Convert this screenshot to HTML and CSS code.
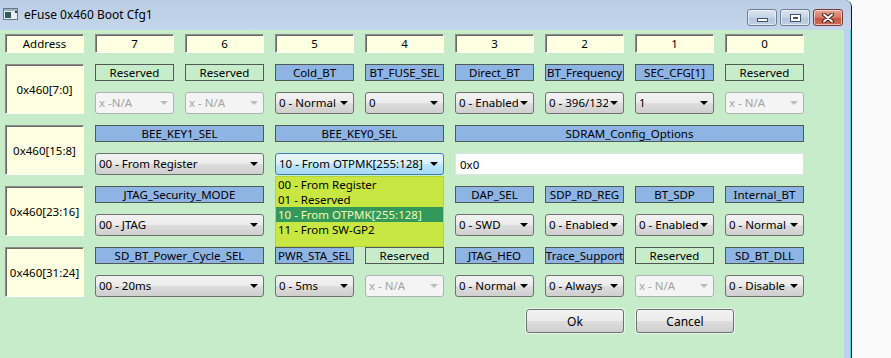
FILE: index.html
```html
<!DOCTYPE html>
<html lang="en">
<head>
    <meta charset="UTF-8">
    <title>eFuse 0x460 Boot Cfg1</title>
    <link rel="stylesheet" href="styles.css">
</head>
<body>
    <div class="screen">
        <div class="window">
            <div class="titlebar">
                <svg class="app-icon" width="16" height="14" viewBox="0 0 16 14">
                    <rect x="0.5" y="1.5" width="14" height="11" fill="#e8edf2" stroke="#6b7785"/>
                    <rect x="1" y="2" width="13" height="2" fill="#9fb3c8"/>
                    <rect x="2" y="5" width="6" height="6" fill="#2f5b5a"/>
                    <rect x="12" y="4" width="2" height="2" fill="#3a3a3a"/>
                </svg>
                <span class="title">eFuse 0x460 Boot Cfg1</span>
                <div class="caption-btns">
                    <div class="cap-btn"><span class="glyph-min"></span></div>
                    <div class="cap-btn"><span class="glyph-max"></span></div>
                    <div class="cap-btn close">
                        <svg width="14" height="10" viewBox="0 0 14 10">
                            <path d="M3 1.5 L11 8.5 M11 1.5 L3 8.5" stroke="#3d2020" stroke-width="4" stroke-linecap="round"/>
                            <path d="M3 1.5 L11 8.5 M11 1.5 L3 8.5" stroke="#ffffff" stroke-width="2" stroke-linecap="round"/>
                        </svg>
                    </div>
                </div>
            </div>

            <div class="client">
                <div class="fuse-grid">
                    <!-- bit headers -->
                    <div class="hdr">Address</div>
                    <div class="hdr">7</div>
                    <div class="hdr">6</div>
                    <div class="hdr">5</div>
                    <div class="hdr">4</div>
                    <div class="hdr">3</div>
                    <div class="hdr">2</div>
                    <div class="hdr">1</div>
                    <div class="hdr">0</div>

                    <!-- 0x460[7:0] -->
                    <div class="addr">0x460[7:0]</div>
                    <div class="lbl reserved">Reserved</div>
                    <div class="lbl reserved">Reserved</div>
                    <div class="lbl">Cold_BT</div>
                    <div class="lbl">BT_FUSE_SEL</div>
                    <div class="lbl">Direct_BT</div>
                    <div class="lbl">BT_Frequency</div>
                    <div class="lbl">SEC_CFG[1]</div>
                    <div class="lbl reserved">Reserved</div>

                    <div class="combo disabled"><span class="val">x -N/A</span></div>
                    <div class="combo disabled"><span class="val">x - N/A</span></div>
                    <div class="combo"><span class="val">0 - Normal</span></div>
                    <div class="combo"><span class="val">0</span></div>
                    <div class="combo"><span class="val">0 - Enabled</span></div>
                    <div class="combo"><span class="val">0 - 396/132MHz</span></div>
                    <div class="combo"><span class="val">1</span></div>
                    <div class="combo disabled"><span class="val">x - N/A</span></div>

                    <!-- 0x460[15:8] -->
                    <div class="addr">0x460[15:8]</div>
                    <div class="lbl span2">BEE_KEY1_SEL</div>
                    <div class="lbl span2">BEE_KEY0_SEL</div>
                    <div class="lbl span4">SDRAM_Config_Options</div>

                    <div class="combo span2"><span class="val">00 - From Register</span></div>
                    <div class="combo span2 open">
                        <span class="val">10 - From OTPMK[255:128]</span>
                        <ul class="drop-list">
                            <li>00 - From Register</li>
                            <li>01 - Reserved</li>
                            <li class="sel">10 - From OTPMK[255:128]</li>
                            <li>11 - From SW-GP2</li>
                        </ul>
                    </div>
                    <div class="text-field span4">0x0</div>

                    <!-- 0x460[23:16] -->
                    <div class="addr">0x460[23:16]</div>
                    <div class="lbl span2">JTAG_Security_MODE</div>
                    <div class="lbl span2 hidden"></div>
                    <div class="lbl">DAP_SEL</div>
                    <div class="lbl">SDP_RD_REG</div>
                    <div class="lbl">BT_SDP</div>
                    <div class="lbl">Internal_BT</div>

                    <div class="combo span2"><span class="val">00 - JTAG</span></div>
                    <div class="combo span2 hidden"></div>
                    <div class="combo"><span class="val">0 - SWD</span></div>
                    <div class="combo"><span class="val">0 - Enabled</span></div>
                    <div class="combo"><span class="val">0 - Enabled</span></div>
                    <div class="combo"><span class="val">0 - Normal</span></div>

                    <!-- 0x460[31:24] -->
                    <div class="addr">0x460[31:24]</div>
                    <div class="lbl span2">SD_BT_Power_Cycle_SEL</div>
                    <div class="lbl">PWR_STA_SEL</div>
                    <div class="lbl reserved">Reserved</div>
                    <div class="lbl">JTAG_HEO</div>
                    <div class="lbl">Trace_Support</div>
                    <div class="lbl reserved">Reserved</div>
                    <div class="lbl">SD_BT_DLL</div>

                    <div class="combo span2"><span class="val">00 - 20ms</span></div>
                    <div class="combo"><span class="val">0 - 5ms</span></div>
                    <div class="combo disabled"><span class="val">x - N/A</span></div>
                    <div class="combo"><span class="val">0 - Normal</span></div>
                    <div class="combo"><span class="val">0 - Always</span></div>
                    <div class="combo disabled"><span class="val">x - N/A</span></div>
                    <div class="combo"><span class="val">0 - Disable</span></div>
                </div>

                <div class="dlg-buttons">
                    <button class="btn">Ok</button>
                    <button class="btn">Cancel</button>
                </div>
            </div>
        </div>
    </div>
</body>
</html>
```

FILE: styles.css
```css
* {
    box-sizing: border-box;
}

body {
    margin: 0;
    background: #f9f9f9;
    font-family: "Noto Sans", "Open Sans", sans-serif;
    font-size: 11.5px;
    color: #000;
}

.screen {
    display: flex;
    height: 358px;
    overflow: hidden;
}

/* Window frame */
.window {
    width: 852px;
    height: 358px;
    display: flex;
    flex-direction: column;
    background: #bcd3ea;
    border-right: 1px solid #101820;
    border-top-right-radius: 7px;
    box-shadow: inset -1px 0 0 #5fc6ee;
    overflow: hidden;
}

.titlebar {
    height: 30px;
    flex-shrink: 0;
    display: flex;
    align-items: center;
    padding-left: 3px;
    padding-right: 8px;
    background: linear-gradient(#b9cde5, #c3d6eb);
}

.app-icon {
    margin-right: 5px;
    margin-top: -2px;
}

.title {
    font-size: 12px;
    color: #000;
    margin-top: -2px;
}

.caption-btns {
    margin-left: auto;
    display: flex;
    gap: 3px;
    align-self: flex-start;
    margin-top: 9px;
}

.cap-btn {
    width: 30px;
    height: 17px;
    border: 1px solid #6d7f96;
    border-radius: 3px;
    background: linear-gradient(#dbe5f0, #c4d3e4 50%, #b2c5dc 51%, #bfd0e3);
    box-shadow: inset 0 0 0 1px rgba(255,255,255,0.55);
    display: flex;
    align-items: center;
    justify-content: center;
}

.cap-btn.close {
    border-color: #7a3a33;
    background: linear-gradient(#e7a595, #d47a66 50%, #c4503a 51%, #d0705a);
}

.glyph-min {
    width: 11px;
    height: 4px;
    margin-top: 5px;
    background: #fff;
    border: 1px solid #44546a;
}

.glyph-max {
    width: 11px;
    height: 8px;
    background: #fff;
    border: 1px solid #44546a;
    box-shadow: inset 0 0 0 2px #fff, inset 0 0 0 3px #44546a;
}

/* Client area */
.client {
    flex: 1;
    width: 844px;
    background: #c6ecca;
    padding: 4px 0 0 5px;
}

.fuse-grid {
    display: grid;
    grid-template-columns: repeat(9, 79px);
    grid-template-rows: 19px repeat(4, 17px 22px);
    column-gap: 11px;
    row-gap: 11px;
}

.span2 {
    grid-column: span 2;
}

.span4 {
    grid-column: span 4;
}

.hidden {
    visibility: hidden;
}

.hdr,
.addr {
    background: #ffffe1;
    border: 1px solid;
    border-color: #8c8c8c #ffffff #ffffff #8c8c8c;
    box-shadow: inset 1px 1px 0 #6a6a6a;
    display: flex;
    align-items: center;
    justify-content: center;
    line-height: 15px;
}

.addr {
    grid-row: span 2;
}

.lbl {
    background: #8db4e3;
    border: 1px solid #4f5a55;
    display: flex;
    align-items: center;
    justify-content: center;
    white-space: nowrap;
    overflow: hidden;
    line-height: 15px;
}

.lbl.reserved {
    background: transparent;
}

/* Win7 style combo box */
.combo {
    position: relative;
    border: 1px solid #707070;
    border-radius: 3px;
    background: linear-gradient(#f2f2f2, #ebebeb 50%, #dddddd 51%, #cfcfcf);
    display: flex;
    align-items: center;
    padding-left: 3px;
    padding-right: 15px;
}

.combo::after {
    content: "";
    position: absolute;
    right: 5px;
    top: 50%;
    margin-top: -2px;
    border-left: 4px solid transparent;
    border-right: 4px solid transparent;
    border-top: 4px solid #000;
}

.combo .val {
    white-space: nowrap;
    overflow: hidden;
    line-height: 16px;
}

.combo.disabled {
    border-color: #adb2b5;
    background: #f4f4f4;
    color: #a3a3a3;
}

.combo.disabled::after {
    border-top-color: #bcbcbc;
}

.combo.open {
    border-color: #3c7fb1;
    background: linear-gradient(#eaf6fd, #d9f0fc 50%, #bee6fd 51%, #a7d9f5);
}

.drop-list {
    position: absolute;
    top: 22px;
    left: -1px;
    right: -1px;
    height: 71px;
    margin: 0;
    padding: 0;
    list-style: none;
    background: #c9e742;
    border: 1px solid #b4d43a;
    z-index: 2;
}

.drop-list li {
    height: 15px;
    line-height: 15px;
    padding-left: 2px;
    white-space: nowrap;
}

.drop-list li.sel {
    background: #33995a;
    color: #f3f9b8;
}

.text-field {
    background: #fff;
    border: 1px solid #dfe3e6;
    display: flex;
    align-items: center;
    padding-left: 4px;
}

/* Dialog buttons */
.dlg-buttons {
    display: flex;
    justify-content: flex-end;
    gap: 12px;
    width: 799px;
    padding-right: 70px;
    margin-top: 12px;
}

.btn {
    width: 98px;
    height: 24px;
    font-family: inherit;
    font-size: 12px;
    color: #000;
    border: 1px solid #707070;
    border-radius: 3px;
    background: linear-gradient(#f2f2f2, #ebebeb 50%, #dddddd 51%, #cfcfcf);
    box-shadow: 0 0 0 1px rgba(255,255,255,0.6);
    padding: 0;
}
```
